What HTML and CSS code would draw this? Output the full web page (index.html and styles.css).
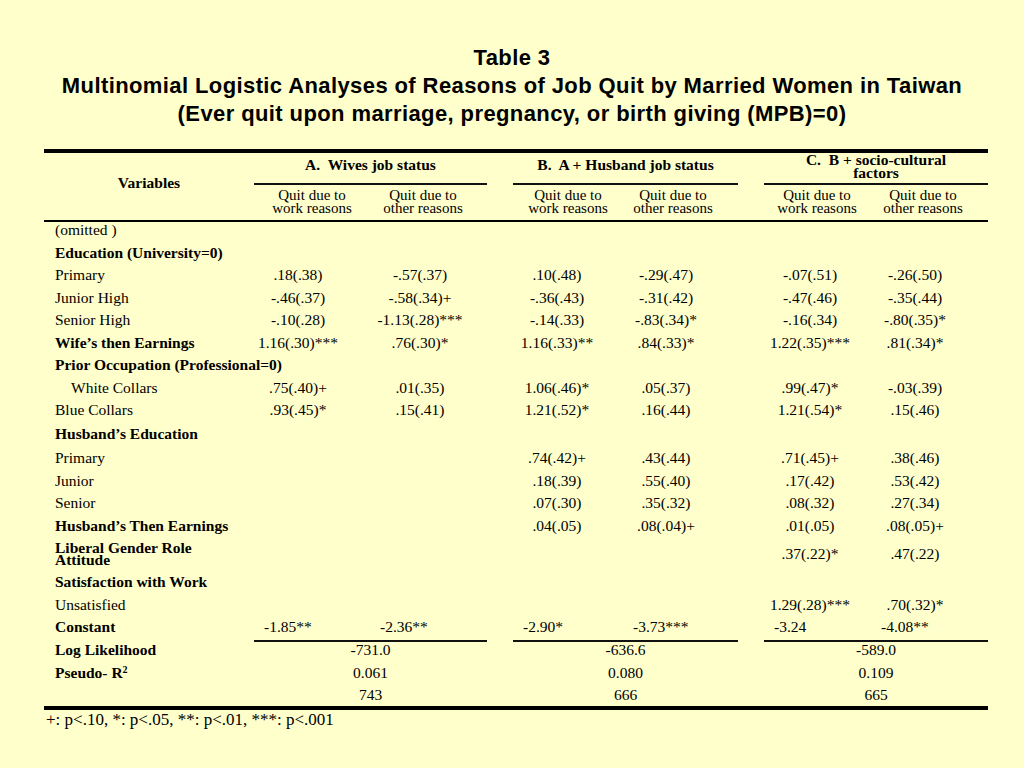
FILE: index.html
```html
<!DOCTYPE html>
<html>
<head>
<meta charset="utf-8">
<title>Table 3</title>
<link rel="stylesheet" href="styles.css">
</head>
<body>
<div class="title">
  <div>Table 3</div>
  <div>Multinomial Logistic Analyses of Reasons of Job Quit by Married Women in Taiwan</div>
  <div>(Ever quit upon marriage, pregnancy, or birth giving (MPB)=0)</div>
</div>

<div class="table">
  <div class="thead">
    <div class="vars">Variables</div>
    <div class="grp ga">A.&nbsp; Wives job status</div>
    <div class="grp gb">B.&nbsp; A + Husband job status</div>
    <div class="grp gc two">C.&nbsp; B + socio-cultural<br>factors</div>
    <div class="sub a1">Quit due to<br>work reasons</div>
    <div class="sub a2">Quit due to<br>other reasons</div>
    <div class="sub b1">Quit due to<br>work reasons</div>
    <div class="sub b2">Quit due to<br>other reasons</div>
    <div class="sub c1">Quit due to<br>work reasons</div>
    <div class="sub c2">Quit due to<br>other reasons</div>
  </div>

  <div class="row"><div class="lbl">(omitted )</div></div>
  <div class="row"><div class="lbl b">Education (University=0)</div></div>
  <div class="row"><div class="lbl">Primary</div>
    <div class="v a1">.18(.38)</div><div class="v a2">-.57(.37)</div>
    <div class="v b1">.10(.48)</div><div class="v b2">-.29(.47)</div>
    <div class="v c1">-.07(.51)</div><div class="v c2">-.26(.50)</div></div>
  <div class="row"><div class="lbl">Junior High</div>
    <div class="v a1">-.46(.37)</div><div class="v a2">-.58(.34)+</div>
    <div class="v b1">-.36(.43)</div><div class="v b2">-.31(.42)</div>
    <div class="v c1">-.47(.46)</div><div class="v c2">-.35(.44)</div></div>
  <div class="row"><div class="lbl">Senior High</div>
    <div class="v a1">-.10(.28)</div><div class="v a2">-1.13(.28)***</div>
    <div class="v b1">-.14(.33)</div><div class="v b2">-.83(.34)*</div>
    <div class="v c1">-.16(.34)</div><div class="v c2">-.80(.35)*</div></div>
  <div class="row"><div class="lbl b">Wife’s then Earnings</div>
    <div class="v a1">1.16(.30)***</div><div class="v a2">.76(.30)*</div>
    <div class="v b1">1.16(.33)**</div><div class="v b2">.84(.33)*</div>
    <div class="v c1">1.22(.35)***</div><div class="v c2">.81(.34)*</div></div>
  <div class="row"><div class="lbl b">Prior Occupation (Professional=0)</div></div>
  <div class="row"><div class="lbl ind">White Collars</div>
    <div class="v a1">.75(.40)+</div><div class="v a2">.01(.35)</div>
    <div class="v b1">1.06(.46)*</div><div class="v b2">.05(.37)</div>
    <div class="v c1">.99(.47)*</div><div class="v c2">-.03(.39)</div></div>
  <div class="row h24"><div class="lbl">Blue Collars</div>
    <div class="v a1">.93(.45)*</div><div class="v a2">.15(.41)</div>
    <div class="v b1">1.21(.52)*</div><div class="v b2">.16(.44)</div>
    <div class="v c1">1.21(.54)*</div><div class="v c2">.15(.46)</div></div>
  <div class="row h24"><div class="lbl b">Husband’s Education</div></div>
  <div class="row"><div class="lbl">Primary</div>
    <div class="v b1">.74(.42)+</div><div class="v b2">.43(.44)</div>
    <div class="v c1">.71(.45)+</div><div class="v c2">.38(.46)</div></div>
  <div class="row"><div class="lbl">Junior</div>
    <div class="v b1">.18(.39)</div><div class="v b2">.55(.40)</div>
    <div class="v c1">.17(.42)</div><div class="v c2">.53(.42)</div></div>
  <div class="row"><div class="lbl">Senior</div>
    <div class="v b1">.07(.30)</div><div class="v b2">.35(.32)</div>
    <div class="v c1">.08(.32)</div><div class="v c2">.27(.34)</div></div>
  <div class="row"><div class="lbl b">Husband’s Then Earnings</div>
    <div class="v b1">.04(.05)</div><div class="v b2">.08(.04)+</div>
    <div class="v c1">.01(.05)</div><div class="v c2">.08(.05)+</div></div>
  <div class="row tall"><div class="lbl b wrap">Liberal Gender Role<br>Attitude</div>
    <div class="v c1">.37(.22)*</div><div class="v c2">.47(.22)</div></div>
  <div class="row"><div class="lbl b">Satisfaction with Work</div></div>
  <div class="row"><div class="lbl">Unsatisfied</div>
    <div class="v c1">1.29(.28)***</div><div class="v c2">.70(.32)*</div></div>
  <div class="row const"><div class="lbl b">Constant</div>
    <div class="k a1">-1.85**</div><div class="k a2">-2.36**</div>
    <div class="k b1">-2.90*</div><div class="k b2">-3.73***</div>
    <div class="k c1">-3.24</div><div class="k c2 last">-4.08**</div></div>
  <div class="row"><div class="lbl b">Log Likelihood</div>
    <div class="s ga">-731.0</div><div class="s gb">-636.6</div><div class="s gc">-589.0</div></div>
  <div class="row"><div class="lbl b">Pseudo- R<sup>2</sup></div>
    <div class="s ga">0.061</div><div class="s gb">0.080</div><div class="s gc">0.109</div></div>
  <div class="row last-row"><div class="lbl"></div>
    <div class="s ga">743</div><div class="s gb">666</div><div class="s gc">665</div></div>
  <div class="note">+: p&lt;.10, *: p&lt;.05, **: p&lt;.01, ***: p&lt;.001</div>
</div>
</body>
</html>
```

FILE: styles.css
```css
html, body {
  margin: 0;
  padding: 0;
  background: #ffffcc;
  color: #000;
}
body {
  width: 1024px;
  height: 768px;
  overflow: hidden;
  font-family: "Liberation Serif", "Times New Roman", serif;
  font-size: 15.5px;
}
.title {
  padding-top: 44px;
  text-align: center;
  font-family: "Liberation Sans", Arial, sans-serif;
  font-weight: bold;
  font-size: 22px;
  letter-spacing: 0.4px;
  line-height: 28px;
}
.table {
  margin: 21px 0 0 44px;
  width: 944px;
}
.thead, .row {
  display: grid;
  grid-template-columns: 210px 116px 117px 26px 110px 115px 26px 110px 114px;
}
.thead {
  border-top: 4px solid #000;
  border-bottom: 2px solid #000;
  grid-template-rows: 32px 35px;
}
.vars {
  grid-column: 1;
  grid-row: 1 / 3;
  align-self: center;
  text-align: center;
  font-weight: bold;
  padding-bottom: 7px;
}
.grp {
  grid-row: 1;
  box-sizing: border-box;
  height: 32px;
  text-align: center;
  font-weight: bold;
  line-height: 16px;
  padding-top: 4px;
  border-bottom: 2px solid #111;
}
.grp.two {
  padding-top: 0;
  line-height: 13px;
}
.ga { grid-column: 2 / 4; }
.gb { grid-column: 5 / 7; }
.gc { grid-column: 8 / 10; }
.a1 { grid-column: 2; }
.a2 { grid-column: 3; }
.b1 { grid-column: 5; }
.b2 { grid-column: 6; }
.c1 { grid-column: 8; }
.c2 { grid-column: 9; }
.sub {
  grid-row: 2;
  text-align: center;
  font-size: 15px;
  line-height: 13px;
  padding-top: 4px;
}
.sub.a2 { padding-right: 11px; }
.sub.b2 { padding-right: 15px; }
.sub.c1 { padding-right: 4px; }
.sub.c2 { padding-right: 16px; }

.row {
  height: 22.5px;
  line-height: 16px;
}
.row.h24 { height: 24px; }
.row.tall { height: 34px; }
.row.const { height: 23px; }
.row.last-row { height: 19px; border-bottom: 4px solid #000; }
.lbl {
  grid-column: 1;
  padding-left: 11px;
  white-space: nowrap;
}
.lbl.ind { padding-left: 27px; }
.b { font-weight: bold; }
.lbl.wrap {
  line-height: 12px;
  padding-top: 2px;
}
.v {
  text-align: center;
  white-space: nowrap;
}
.tall .v { padding-top: 6px; }
.v.a1 { padding-right: 28px; }
.v.a2 { padding-right: 17px; }
.v.b1 { padding-right: 22px; }
.v.b2 { padding-right: 29px; }
.v.c1 { padding-right: 18px; }
.v.c2 { padding-right: 32px; }
.k {
  padding-left: 10px;
  border-bottom: 2px solid #111;
  white-space: nowrap;
}
.k.last { padding-left: 7px; }
.s { text-align: center; }
sup {
  font-size: 10px;
  line-height: 0;
  vertical-align: 5px;
}
.note {
  padding: 2px 0 0 2px;
  font-size: 17px;
  line-height: 16px;
}
```
